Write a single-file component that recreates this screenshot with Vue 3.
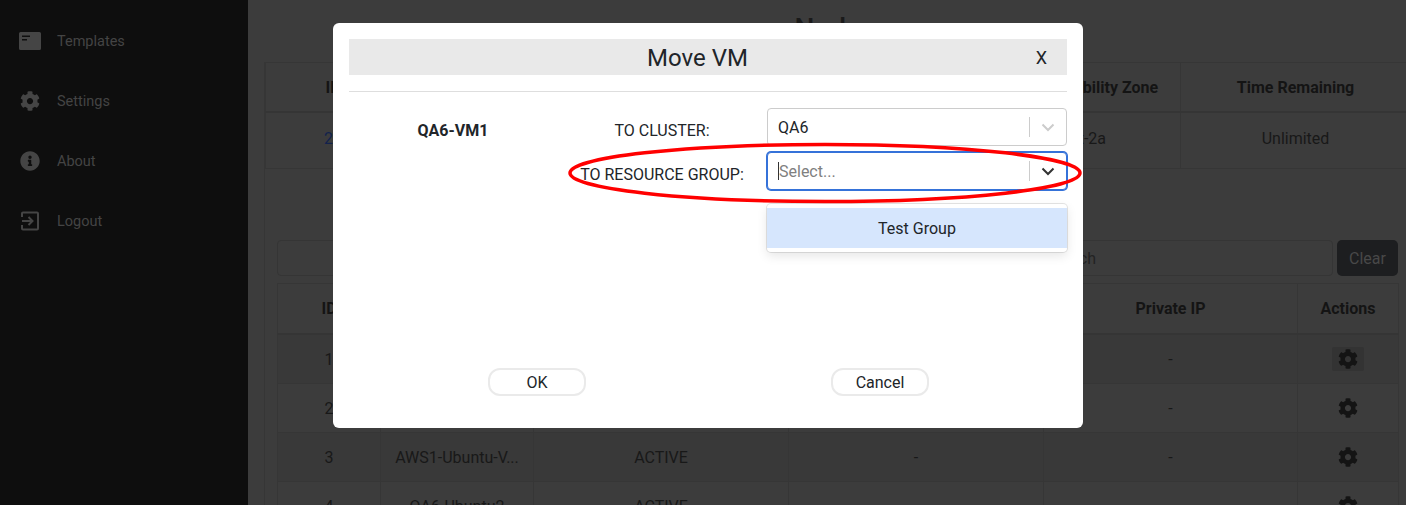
<template>
  <div class="page">
    <aside class="sidebar">
      <div class="nav-item">
        <svg class="nav-icon" viewBox="0 0 22 18" width="22" height="18">
          <path fill-rule="evenodd" d="M1.500 0h19A1.500 1.500 0 0 1 22 1.500v15a1.500 1.500 0 0 1-1.500 1.500h-19A1.500 1.500 0 0 1 0 16.500v-15A1.500 1.500 0 0 1 1.500 0zM3 3.500V5h8V3.500zM3 7v1.500h5V7z" />
        </svg>
        <span>Templates</span>
      </div>
      <div class="nav-item">
        <svg class="nav-icon" viewBox="0 0 512 512" width="20" height="20"><path :d="cogPath" /></svg>
        <span>Settings</span>
      </div>
      <div class="nav-item">
        <svg class="nav-icon" viewBox="0 0 512 512" width="20" height="20"><path :d="infoPath" /></svg>
        <span>About</span>
      </div>
      <div class="nav-item">
        <svg class="nav-icon" viewBox="0 0 20 20" width="20" height="20">
          <path class="logout" d="M2 6V2.500A1 1 0 0 1 3 1.500h14a1 1 0 0 1 1 1v15a1 1 0 0 1-1 1H3a1 1 0 0 1-1-1V14M2 10h10M8.500 6l4 4-4 4" />
        </svg>
        <span>Logout</span>
      </div>
    </aside>

    <main class="content">
      <h1 class="title">Nodes</h1>

      <section class="card">
        <table class="info-table">
          <colgroup>
            <col style="width: 135px" />
            <col />
            <col style="width: 164px" />
            <col style="width: 230px" />
          </colgroup>
          <thead>
            <tr>
              <th>ID</th>
              <th>Name</th>
              <th>Availability Zone</th>
              <th>Time Remaining</th>
            </tr>
          </thead>
          <tbody>
            <tr>
              <td class="link">20</td>
              <td>QA6</td>
              <td class="zone">us-west-2a</td>
              <td>Unlimited</td>
            </tr>
          </tbody>
        </table>

        <div class="search-row">
          <input class="search" placeholder="Search" />
          <button class="clear">Clear</button>
        </div>

        <table class="vm-table">
          <colgroup>
            <col style="width: 103px" />
            <col style="width: 153px" />
            <col style="width: 255px" />
            <col style="width: 255px" />
            <col style="width: 254px" />
            <col style="width: 101px" />
          </colgroup>
          <thead>
            <tr>
              <th>ID</th>
              <th>Name</th>
              <th>Status</th>
              <th>Public IP</th>
              <th>Private IP</th>
              <th>Actions</th>
            </tr>
          </thead>
          <tbody>
            <tr v-for="vm in vms" :key="vm.id">
              <td>{{ vm.id }}</td>
              <td>{{ vm.name }}</td>
              <td>ACTIVE</td>
              <td>-</td>
              <td>-</td>
              <td>
                <span class="gear" :class="{ hovered: vm.id === 1 }">
                  <svg viewBox="0 0 512 512" width="20" height="20"><path :d="cogPath" /></svg>
                </span>
              </td>
            </tr>
          </tbody>
        </table>
      </section>
    </main>

    <div class="modal">
      <header class="modal-title">
        <span class="heading">Move VM</span>
        <span class="close">X</span>
      </header>
      <hr class="divider" />

      <div class="form">
        <div class="vm-name">QA6-VM1</div>
        <div class="label">TO CLUSTER:</div>
        <div class="select">
          <span class="value">QA6</span>
          <span class="sep"></span>
          <svg class="chevron" viewBox="0 0 20 20" width="20" height="20"><path d="M4.500 7.500 10 13l5.500-5.500" /></svg>
        </div>

        <div></div>
        <div class="label">TO RESOURCE GROUP:</div>
        <div class="select focused">
          <span class="caret"></span>
          <span class="placeholder">Select...</span>
          <span class="sep"></span>
          <svg class="chevron" viewBox="0 0 20 20" width="20" height="20"><path d="M4.500 7.500 10 13l5.500-5.500" /></svg>
          <div class="menu">
            <div class="option">Test Group</div>
          </div>
        </div>
      </div>

      <footer class="modal-footer">
        <button class="pill">OK</button>
        <button class="pill">Cancel</button>
      </footer>

      <!-- red annotation drawn on the screenshot -->
      <svg class="annotation" viewBox="0 0 520 64" width="520" height="64">
        <ellipse cx="260" cy="32" rx="255" ry="28.500" />
      </svg>
    </div>
  </div>
</template>

<script setup>
const cogPath =
  'M487.4 315.7l-42.6-24.6c4.3-23.2 4.3-47 0-70.2l42.6-24.6c4.9-2.8 7.1-8.6 5.5-14-11.1-35.6-30-67.8-54.7-94.6-3.8-4.1-10-5.1-14.8-2.3L380.8 110c-17.9-15.4-38.5-27.3-60.8-35.1V25.8c0-5.6-3.9-10.5-9.4-11.7-36.7-8.2-74.3-7.8-109.2 0-5.5 1.2-9.4 6.1-9.4 11.7V75c-22.2 7.9-42.8 19.8-60.8 35.1L88.7 85.5c-4.9-2.8-11-1.9-14.8 2.3-24.7 26.7-43.6 58.9-54.7 94.6-1.7 5.4.6 11.2 5.5 14L67.3 221c-4.3 23.2-4.3 47 0 70.2l-42.6 24.6c-4.9 2.8-7.1 8.6-5.5 14 11.1 35.6 30 67.8 54.7 94.6 3.8 4.1 10 5.1 14.8 2.3l42.6-24.6c17.9 15.4 38.5 27.3 60.8 35.1v49.2c0 5.6 3.9 10.5 9.4 11.7 36.7 8.2 74.3 7.8 109.2 0 5.5-1.2 9.4-6.1 9.4-11.7v-49.2c22.2-7.9 42.8-19.8 60.8-35.1l42.6 24.6c4.9 2.8 11 1.9 14.8-2.3 24.7-26.7 43.6-58.9 54.7-94.6 1.5-5.5-.7-11.3-5.6-14.1zM256 336c-44.1 0-80-35.9-80-80s35.9-80 80-80 80 35.9 80 80-35.9 80-80 80z';
const infoPath =
  'M256 8C119 8 8 119.1 8 256c0 137 111 248 248 248s248-111 248-248C504 119.1 393 8 256 8zm0 110c23.2 0 42 18.8 42 42s-18.8 42-42 42-42-18.8-42-42 18.8-42 42-42zm56 254c0 6.6-5.4 12-12 12h-88c-6.6 0-12-5.4-12-12v-24c0-6.6 5.4-12 12-12h12v-64h-12c-6.6 0-12-5.4-12-12v-24c0-6.6 5.4-12 12-12h64c6.6 0 12 5.4 12 12v100h12c6.6 0 12 5.4 12 12v24z';

const vms = [
  { id: 1, name: 'QA6-VM1' },
  { id: 2, name: 'QA6-VM2' },
  { id: 3, name: 'AWS1-Ubuntu-V...' },
  { id: 4, name: 'QA6-Ubuntu2' }
];
</script>

<style>
html,
body {
  margin: 0;
  overflow: hidden;
}
</style>

<style scoped>
.page {
  display: flex;
  width: 1406px;
  height: 505px;
  overflow: hidden;
  background: #3c3c3c;
  font-family: Roboto, "Liberation Sans", sans-serif;
  font-size: 16px;
  color: #181818;
}

.sidebar {
  flex: 0 0 248px;
  box-sizing: border-box;
  padding-top: 11px;
  background: #0e0e0e;
  color: #444;
  font-size: 14.500px;
}

.nav-item {
  display: flex;
  align-items: center;
  height: 60px;
  padding-left: 20px;
  gap: 17px;
}

.nav-item > svg {
  flex: 0 0 20px;
  fill: #454545;
}

.nav-item:first-child > svg {
  margin-left: -1px;
  flex-basis: 22px;
  margin-right: -1px;
}

.logout {
  fill: none !important;
  stroke: #454545;
  stroke-width: 2;
}

.content {
  flex: 1;
  min-width: 0;
  box-sizing: border-box;
  padding-left: 16px;
}

.title {
  margin: 0;
  height: 62px;
  padding-top: 10px;
  box-sizing: border-box;
  width: 1142px;
  text-align: center;
  font-size: 28px;
  line-height: 38px;
  font-weight: 500;
  color: #1a1a1a;
}

.card {
  border-left: 1px solid #363636;
  height: 443px;
}

table {
  border-collapse: collapse;
  table-layout: fixed;
  text-align: center;
}

th,
td {
  border: 1px solid #363636;
  padding: 0;
}

th {
  height: 48px;
  font-weight: 700;
  color: #141414;
  border-bottom: 2px solid #353535;
}

.info-table {
  width: 1146px;
}

.info-table td {
  height: 50px;
  padding-bottom: 5px;
}

.link {
  color: #12224d;
}

.zone {
  text-align: right;
  padding-right: 74px;
}

.search-row {
  display: flex;
  gap: 4px;
  margin: 71px 8px 7px 12px;
  height: 36px;
}

.search {
  flex: 1;
  min-width: 0;
  box-sizing: border-box;
  border: 1px solid #353535;
  border-radius: 4px;
  background: #3c3c3c;
  padding: 4px 12px;
  font: inherit;
  outline: none;
  text-align: right;
  padding-right: 236px;
}

.search::placeholder {
  color: #232323;
  opacity: 1;
}

.clear {
  flex: 0 0 61px;
  border: 0;
  border-radius: 5px;
  background: #1d1e20;
  color: #484848;
  font: inherit;
}

.vm-table {
  width: 1121px;
  margin-left: 12px;
}

.vm-table th {
  height: 49px;
}

.vm-table td {
  height: 48px;
}

.vm-table tbody tr:nth-child(odd) {
  background: #393939;
}

.gear {
  display: inline-flex;
  align-items: center;
  justify-content: center;
  width: 32px;
  height: 24px;
  vertical-align: middle;
}

.gear svg {
  fill: #141414;
}

.gear.hovered {
  background: #333;
  border-radius: 2px;
}

.modal {
  position: absolute;
  left: 333px;
  top: 23px;
  width: 750px;
  height: 405px;
  box-sizing: border-box;
  padding: 16px;
  border-radius: 6px;
  background: #fff;
  color: #212529;
}

.modal-title {
  position: relative;
  height: 36px;
  padding-right: 21px;
  background: #e9e9e9;
  text-align: center;
  font-size: 24px;
  line-height: 38px;
}

.close {
  position: absolute;
  right: 20px;
  top: 0;
  font-size: 18px;
}

.divider {
  margin: 16px 0;
  border: 0;
  border-top: 1px solid #dedede;
}

.form {
  display: grid;
  grid-template-columns: 208px 210px 300px;
  grid-auto-rows: 38px;
  row-gap: 6px;
}

.vm-name {
  text-align: center;
  font-weight: 700;
  padding-top: 13px;
}

.label {
  text-align: center;
  padding-top: 13px;
  white-space: nowrap;
}

.select {
  position: relative;
  display: flex;
  align-items: center;
  box-sizing: border-box;
  padding-left: 10px;
  border: 1px solid #ccc;
  border-radius: 4px;
  background: #fff;
}

.select.focused {
  border-color: #3572d9;
  box-shadow: 0 0 0 1px #3572d9;
}

.value {
  flex: 1;
}

.placeholder {
  flex: 1;
  color: #808080;
}

.caret {
  width: 1px;
  height: 18px;
  background: #333;
}

.sep {
  width: 1px;
  height: 20px;
  background: #ccc;
}

.chevron {
  margin: 0 8px;
  fill: none;
  stroke: #ccc;
  stroke-width: 2;
}

.focused .chevron {
  stroke: #333;
}

.menu {
  position: absolute;
  left: -1px;
  right: -1px;
  top: 51px;
  padding: 4px 0;
  border-radius: 4px;
  background: #fff;
  box-shadow: 0 0 0 1px rgba(0, 0, 0, 0.1), 0 4px 11px rgba(0, 0, 0, 0.1);
}

.option {
  height: 40px;
  line-height: 41px;
  text-align: center;
  background: #d6e6fd;
}

.modal-footer {
  display: flex;
  gap: 245px;
  margin-top: 178px;
  padding-left: 139px;
}

.pill {
  box-sizing: border-box;
  width: 98px;
  height: 28px;
  padding: 0;
  border: 2px solid #eaeaea;
  border-radius: 12px;
  background: #fff;
  color: #212529;
  font: inherit;
}

.annotation {
  position: absolute;
  left: 232px;
  top: 118px;
  overflow: visible;
}

.annotation ellipse {
  fill: none;
  stroke: #f00;
  stroke-width: 3.500;
}
</style>
